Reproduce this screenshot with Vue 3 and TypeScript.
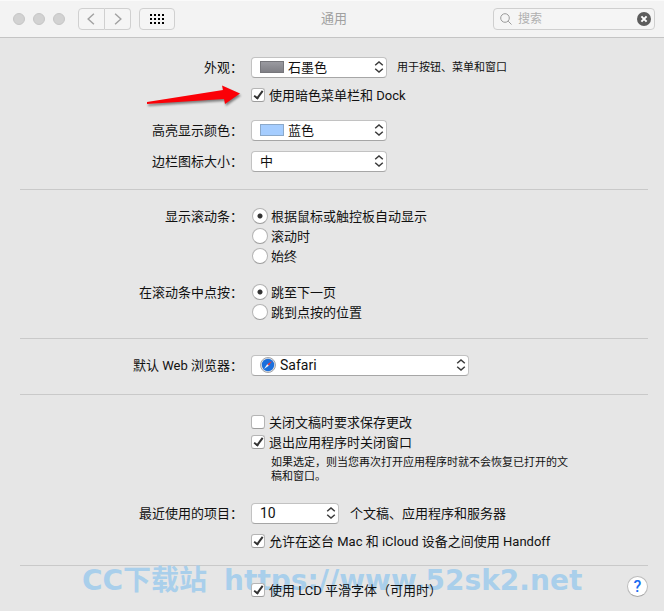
<script setup lang="ts">
import { ref } from 'vue'

const query = ref('')
const appearance = ref('石墨色')
const highlight = ref('蓝色')
const iconSize = ref('中')
const browser = ref('Safari')
const recent = ref('10')
const darkMenu = ref(true)
const askSave = ref(false)
const closeWindows = ref(true)
const handoff = ref(true)
const smoothing = ref(true)
const showBars = ref('auto')
const clickBar = ref('page')

const barOptions = [
  { value: 'auto', text: '根据鼠标或触控板自动显示' },
  { value: 'scrolling', text: '滚动时' },
  { value: 'always', text: '始终' },
]
const clickOptions = [
  { value: 'page', text: '跳至下一页' },
  { value: 'spot', text: '跳到点按的位置' },
]
</script>

<template>
  <div class="window">
    <header class="toolbar">
      <div class="lights"><i></i><i></i><i></i></div>
      <div class="nav">
        <button type="button" aria-label="后退">
          <svg width="26" height="20" viewBox="0 0 26 20"><path d="M15.5 4.5 9.5 10l6 5.5" /></svg>
        </button>
        <button type="button" aria-label="前进">
          <svg width="26" height="20" viewBox="0 0 26 20"><path d="M10.5 4.5l6 5.5-6 5.5" /></svg>
        </button>
      </div>
      <button type="button" class="grid-button" aria-label="显示全部">
        <svg width="14" height="10" viewBox="0 0 14 10" shape-rendering="crispEdges">
          <template v-for="r in 3" :key="r">
            <rect v-for="c in 4" :key="c" :x="(c - 1) * 4" :y="(r - 1) * 4" width="2" height="2" />
          </template>
        </svg>
      </button>
      <h1>通用</h1>
      <div class="search">
        <svg class="lens" width="12" height="12" viewBox="0 0 12 12"><circle cx="5" cy="5" r="4.3" /><path d="M8.2 8.2 11.5 11.5" /></svg>
        <input v-model="query" type="text" placeholder="搜索" aria-label="搜索" />
        <button type="button" aria-label="清除" @click="query = ''">
          <svg width="14" height="14" viewBox="0 0 14 14"><circle cx="7" cy="7" r="7" /><path d="M4.4 4.4l5.2 5.2M9.6 4.4 4.4 9.6" /></svg>
        </button>
      </div>
    </header>

    <main>
      <section class="look">
        <div class="row">
          <label class="name" for="appearance">外观：</label>
          <div class="field">
            <div class="picker medium">
              <select id="appearance" v-model="appearance" class="with-swatch"><option>石墨色</option><option>蓝色</option></select>
              <span class="swatch graphite"></span>
              <svg class="arrows" width="10" height="12" viewBox="0 0 10 12"><path d="M1.2 4.2 5 1l3.8 3.2M1.2 7.8 5 11l3.8-3.2" /></svg>
            </div>
            <span class="hint">用于按钮、菜单和窗口</span>
          </div>
        </div>
        <div class="row after-control">
          <label class="field choice"><input v-model="darkMenu" type="checkbox" /><span>使用暗色菜单栏和 Dock</span></label>
          <svg class="pointer" width="100" height="26" viewBox="0 0 100 26">
            <path d="M2 18 78 6 77 1.5 95 9.5 80 20 79 15 2 20Z" />
          </svg>
        </div>
        <div class="row highlight">
          <label class="name" for="highlight">高亮显示颜色：</label>
          <div class="field">
            <div class="picker medium">
              <select id="highlight" v-model="highlight" class="with-swatch"><option>蓝色</option><option>石墨色</option></select>
              <span class="swatch blue"></span>
              <svg class="arrows" width="10" height="12" viewBox="0 0 10 12"><path d="M1.2 4.2 5 1l3.8 3.2M1.2 7.8 5 11l3.8-3.2" /></svg>
            </div>
          </div>
        </div>
        <div class="row size">
          <label class="name" for="size">边栏图标大小：</label>
          <div class="field">
            <div class="picker medium">
              <select id="size" v-model="iconSize"><option>小</option><option>中</option><option>大</option></select>
              <svg class="arrows" width="10" height="12" viewBox="0 0 10 12"><path d="M1.2 4.2 5 1l3.8 3.2M1.2 7.8 5 11l3.8-3.2" /></svg>
            </div>
          </div>
        </div>
      </section>

      <section class="scrolling">
        <div class="row" role="radiogroup" aria-labelledby="bars">
          <span id="bars" class="name">显示滚动条：</span>
          <div class="options">
            <label v-for="o in barOptions" :key="o.value" class="choice">
              <input v-model="showBars" type="radio" name="bars" :value="o.value" /><span>{{ o.text }}</span>
            </label>
          </div>
        </div>
        <div class="row" role="radiogroup" aria-labelledby="click">
          <span id="click" class="name">在滚动条中点按：</span>
          <div class="options">
            <label v-for="o in clickOptions" :key="o.value" class="choice">
              <input v-model="clickBar" type="radio" name="click" :value="o.value" /><span>{{ o.text }}</span>
            </label>
          </div>
        </div>
      </section>

      <section class="browser">
        <div class="row">
          <label class="name" for="browser">默认 Web 浏览器：</label>
          <div class="field">
            <div class="picker large">
              <select id="browser" v-model="browser" class="with-icon"><option>Safari</option></select>
              <svg class="safari" width="16" height="16" viewBox="0 0 16 16">
                <circle cx="8" cy="8" r="7.5" fill="#dfe1e4" stroke="#8f9298" stroke-width=".8" />
                <circle cx="8" cy="8" r="6.2" fill="#1b6fdc" />
                <path d="M12 4 7.2 7.2l1.6 1.6Z" fill="#f2373c" />
                <path d="M4 12 7.2 7.2l1.6 1.6Z" fill="#f4f7fb" />
              </svg>
              <svg class="arrows" width="10" height="12" viewBox="0 0 10 12"><path d="M1.2 4.2 5 1l3.8 3.2M1.2 7.8 5 11l3.8-3.2" /></svg>
            </div>
          </div>
        </div>
      </section>

      <section class="documents">
        <div class="row"><label class="field choice"><input v-model="askSave" type="checkbox" /><span>关闭文稿时要求保存更改</span></label></div>
        <div class="row"><label class="field choice"><input v-model="closeWindows" type="checkbox" /><span>退出应用程序时关闭窗口</span></label></div>
        <div class="row"><p class="note">如果选定，则当您再次打开应用程序时就不会恢复已打开的文稿和窗口。</p></div>
        <div class="row recent">
          <label class="name" for="recent">最近使用的项目：</label>
          <div class="field">
            <div class="picker small">
              <select id="recent" v-model="recent"><option>5</option><option>10</option><option>20</option></select>
              <svg class="arrows" width="10" height="12" viewBox="0 0 10 12"><path d="M1.2 4.2 5 1l3.8 3.2M1.2 7.8 5 11l3.8-3.2" /></svg>
            </div>
            <span>个文稿、应用程序和服务器</span>
          </div>
        </div>
        <div class="row after-control"><label class="field choice"><input v-model="handoff" type="checkbox" /><span>允许在这台 Mac 和 iCloud 设备之间使用 Handoff</span></label></div>
      </section>

      <section class="fonts">
        <div class="watermark"><span>CC下载站</span><span>https://www.52sk2.net</span></div>
        <div class="row"><label class="field choice"><input v-model="smoothing" type="checkbox" /><span>使用 LCD 平滑字体（可用时）</span></label></div>
        <button type="button" class="help" aria-label="帮助">?</button>
      </section>
    </main>
  </div>
</template>

<style>
body {
  margin: 0;
  background: #e6e6e6;
}
</style>

<style scoped>
.window {
  min-height: 100vh;
  background: #e6e6e6;
  color: #111;
  font: 13px/20px Roboto, "Noto Sans CJK SC", sans-serif;
}
*,
*::after {
  box-sizing: border-box;
}
button,
select,
input {
  font: inherit;
  margin: 0;
  color: inherit;
}
button {
  padding: 0;
}
svg {
  display: block;
}
.toolbar {
  display: flex;
  align-items: center;
  height: 38px;
  padding: 0 9px 0 13px;
  background: #f3f3f3;
  border-top: 1px solid #fafafa;
  border-bottom: 1px solid #c4c4c4;
}
.lights {
  display: flex;
  gap: 8px;
}
.lights i {
  width: 12px;
  height: 12px;
  border: 1px solid #c6c6c6;
  border-radius: 50%;
  background: #d2d2d2;
}
.nav {
  display: flex;
  margin-left: 13px;
}
.nav button,
.grid-button {
  display: flex;
  align-items: center;
  justify-content: center;
  height: 22px;
  border: 1px solid #d0d0d0;
  border-radius: 4px;
  background: #f5f5f5;
}
.nav button {
  width: 27px;
}
.nav button:first-child {
  border-radius: 4px 0 0 4px;
}
.nav button:last-child {
  width: 26px;
  border-left: 0;
  border-radius: 0 4px 4px 0;
}
.nav path {
  fill: none;
  stroke: #a2a2a2;
  stroke-width: 1.5;
}
.grid-button {
  width: 36px;
  margin-left: 8px;
}
h1 {
  flex: 1;
  margin: 0;
  font-size: 13px;
  font-weight: 400;
  text-align: center;
  color: #a0a0a0;
}
.search {
  display: flex;
  align-items: center;
  gap: 6px;
  width: 162px;
  height: 22px;
  padding: 0 3px 0 6px;
  border: 1px solid #cfcfcf;
  border-radius: 4px;
  background: #f5f5f5;
}
.search input {
  flex: 1;
  min-width: 0;
  height: 20px;
  padding: 0;
  border: 0;
  outline: 0;
  background: none;
  font-size: 12px;
}
.search input::placeholder {
  color: #b0b0b0;
  opacity: 1;
}
.search button {
  border: 0;
  background: none;
}
.search button circle {
  fill: #5c5c5c;
}
.search button path {
  stroke: #fff;
  stroke-width: 2;
}
.lens {
  fill: none;
  stroke: #9a9a9a;
}
main {
  padding: 0 16px 0 20px;
}
section {
  border-bottom: 1px solid #c9c9c9;
}
.look {
  padding: 19px 0 18px;
}
.scrolling {
  display: grid;
  gap: 16px;
  padding: 16px 0;
}
.browser {
  padding: 16px 0 19px;
}
.documents {
  padding: 17px 0 14px;
}
.fonts {
  position: relative;
  display: flex;
  padding: 14px 0 11px;
  border-bottom: 0;
}
.row {
  position: relative;
  display: grid;
  grid-template-columns: 223px 1fr;
  column-gap: 8px;
  flex: 1;
}
.after-control {
  margin-top: 8px;
}
.highlight {
  margin-top: 15px;
}
.size {
  margin-top: 11px;
}
.recent {
  margin-top: 19px;
}
.name {
  height: 20px;
  line-height: 22px;
  text-align: right;
  white-space: nowrap;
}
.field,
.options,
.note {
  grid-column: 2;
}
.field {
  display: flex;
  align-items: center;
  height: 20px;
  gap: 11px;
  white-space: nowrap;
}
.choice {
  display: flex;
  align-items: center;
  gap: 4px;
  height: 20px;
}
.field > span,
.choice > span {
  padding-top: 1px;
}
.hint {
  margin-left: -1px;
  font-size: 11px;
}
.note {
  width: 300px;
  margin: 4px 0 0 20px;
  font-size: 11px;
  line-height: 14px;
}
.picker {
  position: relative;
}
.small {
  width: 88px;
}
.medium {
  width: 136px;
}
.large {
  width: 218px;
}
select {
  display: block;
  appearance: none;
  width: 100%;
  height: 21px;
  padding: 0 20px 0 8px;
  border: 1px solid #c2c2c2;
  border-bottom-color: #a6a6a6;
  border-radius: 4px;
  background: #fff;
  line-height: 19px;
}
#recent,
#browser {
  font-size: 14px;
}
select.with-swatch {
  padding-left: 36px;
}
select.with-icon {
  padding-left: 28px;
}
.swatch {
  position: absolute;
  left: 9px;
  top: 4px;
  width: 24px;
  height: 12px;
  pointer-events: none;
}
.graphite {
  border: 1px solid #76767b;
  background: linear-gradient(#9a9aa0, #7f7f85);
}
.blue {
  border: 1px solid #8ba9ca;
  background: #a5cdff;
}
.safari {
  position: absolute;
  left: 9px;
  top: 2px;
  pointer-events: none;
}
.arrows {
  position: absolute;
  right: 3px;
  top: 4px;
  fill: none;
  stroke: #3a3a3a;
  stroke-width: 1.5;
  pointer-events: none;
}
input[type='checkbox'],
input[type='radio'] {
  appearance: none;
  flex: none;
  border: 1px solid #b5b5b5;
  border-bottom-color: #9c9c9c;
  background: #fff;
}
input[type='checkbox'] {
  position: relative;
  width: 14px;
  height: 14px;
  border-radius: 3px;
}
input[type='checkbox']:checked::after {
  content: '';
  position: absolute;
  left: 4px;
  top: 0;
  width: 5px;
  height: 10px;
  border: solid #333;
  border-width: 0 2px 2px 0;
  transform: rotate(36deg);
}
.options .choice {
  gap: 3px;
  padding-left: 1px;
}
input[type='radio'] {
  width: 16px;
  height: 16px;
  border-radius: 50%;
}
input[type='radio']:checked {
  background: radial-gradient(circle, #333 2px, #fff 3px);
}
.pointer {
  position: absolute;
  left: 125px;
  top: -1px;
  fill: #fb0007;
  filter: drop-shadow(1px 2px 1px rgba(0, 0, 0, 0.45));
}
.watermark {
  position: absolute;
  left: 62px;
  top: -3px;
  display: flex;
  gap: 17px;
  color: #a9cfeb;
  font: 700 28px/36px "DejaVu Sans", "Noto Sans CJK SC", sans-serif;
  white-space: nowrap;
}
.help {
  position: relative;
  width: 21px;
  height: 21px;
  margin-top: -4px;
  border: 1px solid #bcbcbc;
  border-bottom-color: #a6a6a6;
  border-radius: 50%;
  background: #fff;
  color: #1a6cf0;
  font-size: 16px;
  font-weight: 500;
  line-height: 19px;
}
</style>
